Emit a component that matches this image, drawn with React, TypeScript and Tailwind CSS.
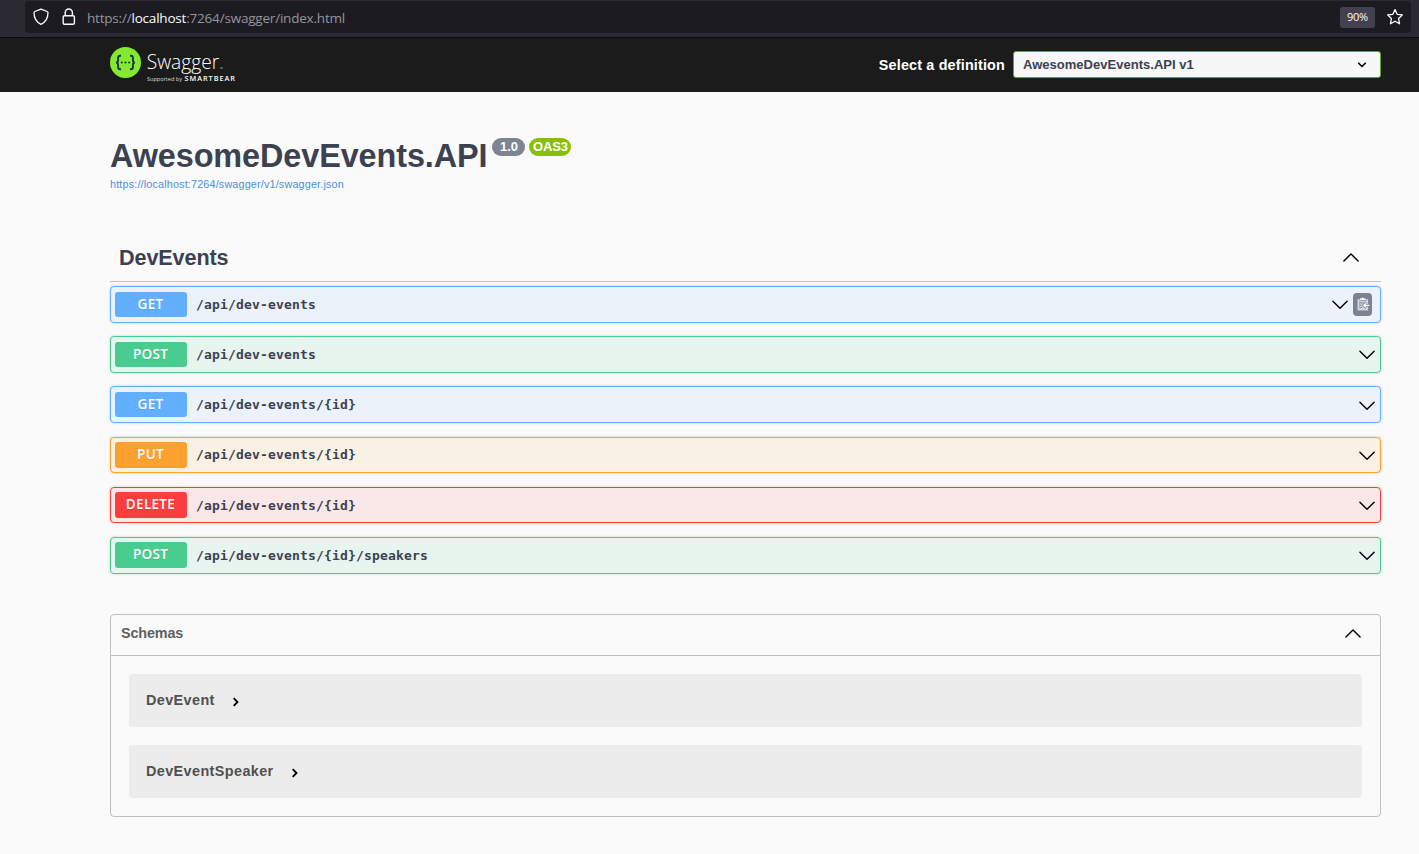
import React from "react";

type Method = "GET" | "POST" | "PUT" | "DELETE";

const styles: Record<Method, { row: string; badge: string }> = {
  GET: { row: "border-[#61affe] bg-[#ebf2fa]", badge: "bg-[#61affe]" },
  POST: { row: "border-[#49cc90] bg-[#e8f4ee]", badge: "bg-[#49cc90]" },
  PUT: { row: "border-[#fca130] bg-[#faf1e5]", badge: "bg-[#fca130]" },
  DELETE: { row: "border-[#f93e3e] bg-[#fae7e7]", badge: "bg-[#f93e3e]" },
};

const operations: { method: Method; path: string; copy?: boolean }[] = [
  { method: "GET", path: "/api/dev-events", copy: true },
  { method: "POST", path: "/api/dev-events" },
  { method: "GET", path: "/api/dev-events/{id}" },
  { method: "PUT", path: "/api/dev-events/{id}" },
  { method: "DELETE", path: "/api/dev-events/{id}" },
  { method: "POST", path: "/api/dev-events/{id}/speakers" },
];

function Chevron({ up = false }: { up?: boolean }) {
  return (
    <svg width="18" height="18" viewBox="0 0 18 18" fill="none" stroke="#000" strokeWidth="1.4" strokeLinecap="round" strokeLinejoin="round" className="shrink-0">
      <path d={up ? "M1.9 11.9 9 4.9l7.1 7" : "M1.9 6.2 9 13.2l7.1-7"} />
    </svg>
  );
}

function AddressBar() {
  return (
    <div className="h-[38px] shrink-0 border-b border-[#0c0c0d] bg-[#2b2a33] pt-px pr-2 pl-[25px]">
      <div className="flex h-8 items-center rounded bg-[#1c1b22] pr-[7px] pl-2">
        <svg width="16" height="18" viewBox="0 0 16 18" fill="none" stroke="#fbfbfe" strokeWidth="1.3" strokeLinejoin="round">
          <path d="M8 1.2 14.2 3.5Q15 3.8 15 4.6C15 10.6 12 14.6 8 16.4C4 14.6 1 10.6 1 4.6Q1 3.8 1.8 3.5Z" />
        </svg>
        <svg width="14" height="18" viewBox="0 0 14 18" fill="none" stroke="#fbfbfe" strokeWidth="1.4" className="ml-[13px]">
          <rect x="1.2" y="7.7" width="11.2" height="8.6" rx="1.4" />
          <path d="M3.2 7.5V4.6a3.6 3.6 0 0 1 7.2 0v2.9" />
        </svg>
        <div className="ml-[11px] pt-[2px] font-['Open_Sans',sans-serif] text-[13.5px] leading-5 tracking-[-0.2px] whitespace-nowrap text-[#96959b]">
          https://<span className="text-[#fbfbfe]">localhost</span>:7264/swagger/index.html
        </div>
        <div className="ml-auto flex h-[21px] w-[35px] items-center justify-center rounded-[3px] bg-[#42414d] pt-px font-['Open_Sans',sans-serif] text-[11px] tracking-[-0.3px] text-[#fbfbfe]">
          90%
        </div>
        <svg width="18" height="18" viewBox="0 0 18 18" fill="none" stroke="#fbfbfe" strokeWidth="1.3" strokeLinejoin="round" className="ml-[11px]">
          <path d="M9 1.6 11.2 6.3 16.4 6.9 12.6 10.5 13.5 15.8 9 13.2 4.5 15.8 5.4 10.5 1.6 6.9 6.8 6.3Z" />
        </svg>
      </div>
    </div>
  );
}

function Logo() {
  return (
    <svg width="130" height="40" viewBox="0 0 130 40" className="shrink-0">
      <circle cx="15.5" cy="17.5" r="15.5" fill="#85ea2d" />
      <g fill="none" stroke="#173647" strokeWidth="1.9">
        <path d="M11 10.7h-.9q-2 0-2 2v2.2q0 2.6-2 2.6q2 0 2 2.6v2.2q0 2 2 2h.9" />
        <path d="M20 10.7h.9q2 0 2 2v2.2q0 2.6 2 2.6q-2 0-2 2.6v2.2q0 2-2 2h-.9" />
      </g>
      <g fill="#173647">
        <circle cx="11.8" cy="17.5" r="1.1" />
        <circle cx="15.5" cy="17.5" r="1.1" />
        <circle cx="19.2" cy="17.5" r="1.1" />
      </g>
      <text x="36.7" y="24.4" fill="#fff" textLength="72.5" lengthAdjust="spacingAndGlyphs" className="font-['Open_Sans',sans-serif] text-[20.5px] font-light">Swagger</text>
      <path d="M110 23h3" stroke="#aaa" strokeWidth=".8" />
      <text x="37" y="36" fill="#ddd" textLength="35" lengthAdjust="spacingAndGlyphs" className="font-['Open_Sans',sans-serif] text-[6px]">Supported by</text>
      <text x="74.5" y="36" fill="#fff" textLength="50.5" lengthAdjust="spacing" className="font-['Open_Sans',sans-serif] text-[7.3px] font-semibold">SMARTBEAR</text>
    </svg>
  );
}

function TopBar() {
  return (
    <header className="flex h-[54px] shrink-0 items-start justify-between bg-[#1b1b1b] pr-[38px] pl-[110px]">
      <div className="pt-[7px]">
        <Logo />
      </div>
      <div className="flex items-center pt-[13px]">
        <span className="mr-2 pt-[2px] text-[14.4px] font-bold tracking-[0.16px] text-white">Select a definition</span>
        <div className="flex h-[27px] w-[368px] items-center justify-between rounded-[3px] border border-[#62a03f] bg-[#f7f7f7] pr-[13px] pl-[9px] text-[13px] font-bold text-[#3b4151]">
          <span className="pt-px tracking-[0.02px]">AwesomeDevEvents.API v1</span>
          <svg width="10" height="8" viewBox="0 0 10 8" fill="none" stroke="#000" strokeWidth="1.6" strokeLinecap="round" strokeLinejoin="round" className="mt-px">
            <path d="M1.7 2.2 5 5.5l3.3-3.3" />
          </svg>
        </div>
      </div>
    </header>
  );
}

function CopyButton() {
  return (
    <div className="mr-[3px] ml-[4px] flex h-[23px] w-[19px] items-center justify-center rounded bg-[#7d8293]">
      <svg width="14" height="16" viewBox="0 0 14 16">
        <path d="M1.5 3.2h10.6v11.2H1.5z" fill="#d3d6dc" />
        <path d="M4 4V2.4h1.5a1.3 1.3 0 0 1 2.5 0h1.5V4z" fill="#fff" />
        <path d="M3.2 4.6h7.2" stroke="#7d8293" strokeWidth=".8" />
        <path d="M3 6.9h4.6M3 9.1h2.6M3 11.4h3.2" stroke="#7d8293" strokeWidth="1" />
        <path d="M13 9.3H8M10.2 6.8 7.6 9.3l2.6 2.5" fill="none" stroke="#7d8293" strokeWidth="2.6" />
        <path d="M13.4 9.3H8M10 7.2 7.8 9.3 10 11.4" fill="none" stroke="#fff" strokeWidth="1.3" />
      </svg>
    </div>
  );
}

function Schema({ name }: { name: string }) {
  return (
    <div className="flex h-[53px] items-center rounded bg-[#ececec] pl-[17px] text-[14.4px] font-bold text-[#505050]">
      <span className="pb-px leading-[20px] tracking-[0.4px]">{name}</span>
      <svg width="8" height="10" viewBox="0 0 8 10" fill="none" stroke="#000" strokeWidth="1.8" className="mt-[3px] ml-[17px]">
        <path d="M1.7 1.2 5.5 5 1.7 8.8" />
      </svg>
    </div>
  );
}

export default function App() {
  return (
    <div className="flex h-[854px] w-full flex-col overflow-hidden bg-[#fafafa] font-['Liberation_Sans',Arial,sans-serif]">
      <AddressBar />
      <TopBar />
      <main className="pr-[38px] pl-[110px]">
        <section className="pt-[45px]">
          <div className="flex h-[38px] items-start">
            <h1 className="text-[32.4px] leading-[38px] font-bold tracking-[-0.09px] whitespace-nowrap text-[#3b4151]">AwesomeDevEvents.API</h1>
            <div className="mt-px ml-[5px] flex gap-1 text-[13px] leading-[18px] font-bold text-white">
              <span className="h-[18px] w-[33px] rounded-full bg-[#7d8492] text-center">1.0</span>
              <span className="h-[18px] w-[42px] rounded-full bg-[#89bf04] text-center tracking-[-0.1px]">OAS3</span>
            </div>
          </div>
          <a className="mt-[3px] block text-[10.8px] leading-[13px] tracking-[0.165px] text-[#4990e2]">https://localhost:7264/swagger/v1/swagger.json</a>
        </section>

        <section className="mt-[43px]">
          <div className="flex h-[48px] items-center justify-between border-b border-[#c0c1c5] pr-[21px] pl-[9px]">
            <h2 className="text-[21.6px] leading-[26px] font-bold tracking-[-0.1px] text-[#3b4151]">DevEvents</h2>
            <Chevron up />
          </div>
          <div className="mt-1 flex flex-col gap-[13.54px]">
            {operations.map((op) => (
              <div
                key={op.method + op.path}
                className={`flex h-[36.65px] items-center rounded-[4px] border pl-1 shadow-[0_0_3px_rgba(0,0,0,0.19)] ${styles[op.method].row}`}
              >
                <span
                  className={`h-[25.6px] w-[72px] rounded-[3px] pr-px text-center font-['Open_Sans',sans-serif] text-[13.5px] leading-[24px] font-semibold tracking-[0.3px] text-white [text-shadow:0_1px_0_rgba(0,0,0,0.1)] ${styles[op.method].badge}`}
                >
                  {op.method}
                </span>
                <span className="ml-[9px] pt-px font-['DejaVu_Sans_Mono',monospace] text-[13px] leading-5 font-bold tracking-[0.17px] text-[#3b4151]">
                  {op.path}
                </span>
                <div className={`ml-auto flex items-center ${op.copy ? "pr-[5px]" : "pr-1"}`}>
                  <Chevron />
                  {op.copy && <CopyButton />}
                </div>
              </div>
            ))}
          </div>
        </section>

        <section className="mt-[40px] h-[203px] rounded-[4px] border border-[#bfc0c4]">
          <div className="flex h-[41px] items-center justify-between border-b border-[#bfc0c4] pr-[18px] pb-[2px] pl-[10px]">
            <h3 className="pb-[2px] text-[14.4px] leading-[20px] font-bold tracking-[-0.15px] text-[#5f5f5f]">Schemas</h3>
            <Chevron up />
          </div>
          <div className="flex flex-col gap-[18px] px-[18px] pt-[18px]">
            <Schema name="DevEvent" />
            <Schema name="DevEventSpeaker" />
          </div>
        </section>
      </main>
    </div>
  );
}
